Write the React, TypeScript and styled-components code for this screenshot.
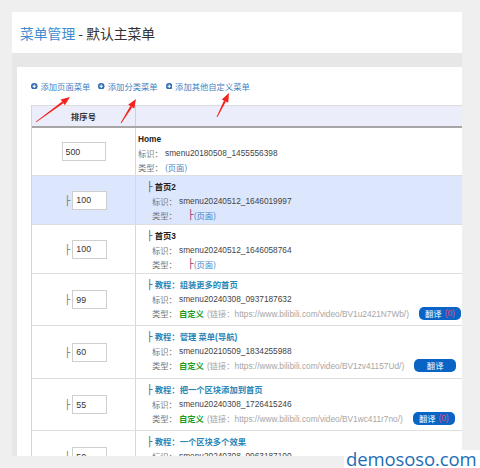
import React from 'react';
import styled, { createGlobalStyle } from 'styled-components';

const GlobalStyle = createGlobalStyle`
  html, body { margin: 0; padding: 0; background: #efefef; }
  body { font-family: "Liberation Sans", Arial, "Noto Sans CJK SC", sans-serif; }
  * { box-sizing: border-box; }
`;

const Screen = styled.div`
  position: relative;
  width: 480px;
  height: 468px;
  overflow: hidden;
  background: #efefef;
  padding: 12px 0 0 12px;
`;

const Frame = styled.div`
  width: 450px;
  display: flex;
  flex-direction: column;
`;

const Header = styled.div`
  height: 41px;
  background: #fff;
  display: flex;
  align-items: center;
  padding-left: 8px;
  font-size: 13.8px;
  color: #333;
  font-family: "Noto Sans CJK SC", sans-serif;
`;

const TitleLink = styled.span`
  color: #3f8ccd;
`;

const Body = styled.div`
  background: #e7e7e7;
  padding: 14px 0 0 5px;
  height: 403px;
`;

const Panel = styled.div`
  background: #fff;
  height: 389px;
  overflow: hidden;
  padding-left: 14px;
`;

const LinkBar = styled.div`
  height: 38px;
  display: flex;
  align-items: center;
  gap: 8px;
`;

const AddLink = styled.span`
  display: inline-flex;
  align-items: center;
  gap: 3px;
  color: #3f7fc4;
  font-size: 8.3px;
  font-family: "Noto Sans CJK SC", sans-serif;
  line-height: 10px;
`;

const Table = styled.div`
  width: 470px;
  border-left: 1px solid #d5d5d5;
  border-top: 1px solid #dcdcdc;
`;

const HeadRow = styled.div`
  display: grid;
  grid-template-columns: 104px 1fr;
  height: 22px;
  background: #ecedfb;
  border-bottom: 2px solid #a6a6a6;
`;

const HeadCell = styled.div`
  display: flex;
  align-items: center;
  justify-content: center;
  border-right: 1px solid #d0d0d0;
  font-size: 8.3px;
  font-weight: bold;
  color: #333;
  font-family: "Noto Sans CJK SC", sans-serif;
`;

const Row = styled.div<{ $h: number; $hi?: boolean }>`
  display: grid;
  grid-template-columns: 104px 1fr;
  height: ${(p) => p.$h}px;
  background: ${(p) => (p.$hi ? '#dce6fc' : '#fff')};
  border-bottom: 1px solid #dedede;
`;

const SortCell = styled.div<{ $shift: number }>`
  display: flex;
  align-items: center;
  justify-content: center;
  gap: 1px;
  padding-left: ${(p) => p.$shift}px;
  border-right: 1px solid #d8d8d8;
`;

const Branch = styled.span<{ $color?: string; $gap?: number }>`
  font-family: "DejaVu Sans", sans-serif;
  font-size: 9.5px;
  color: ${(p) => p.$color || '#777'};
  font-weight: normal;
  margin-right: ${(p) => p.$gap || 0}px;
`;

const SortInput = styled.input<{ $w: number }>`
  width: ${(p) => p.$w}px;
  height: 19px;
  border: 1px solid #cfcfcf;
  padding: 0 0 0 3px;
  font-size: 8.8px;
  color: #333;
  font-family: "Liberation Sans", Arial, sans-serif;
  background: #fff;
  outline: none;
`;

const ContentCell = styled.div`
  padding: 4px 0 0 2px;
  font-size: 8.3px;
  line-height: 14px;
  color: #444;
  white-space: nowrap;
`;

const Line = styled.div<{ $indent: number }>`
  padding-left: ${(p) => p.$indent}px;
  height: 14px;
  display: flex;
  align-items: center;
`;

const ItemTitle = styled.span<{ $blue?: boolean }>`
  font-weight: bold;
  color: ${(p) => (p.$blue ? '#2a86b6' : '#222')};
  font-family: "Liberation Sans", Arial, "Noto Sans CJK SC", sans-serif;
`;

const Label = styled.span`
  display: inline-block;
  width: 27px;
  color: #777;
  font-family: "Noto Sans CJK SC", sans-serif;
`;

const Value = styled.span`
  color: #444;
`;

const PageType = styled.span`
  color: #3f7fc9;
  font-family: "Noto Sans CJK SC", sans-serif;
`;

const PagePrefix = styled.span`
  margin-left: 9px;
  display: inline-flex;
  align-items: center;
`;

const Custom = styled.span`
  color: #1c9a1c;
  font-weight: bold;
  font-family: "Noto Sans CJK SC", sans-serif;
`;

const LinkText = styled.span`
  color: #a6a6a6;
  margin-left: 3px;
`;

const LinkLabel = styled.span`
  font-family: "Noto Sans CJK SC", sans-serif;
`;

const TransButton = styled.span`
  display: inline-flex;
  align-items: center;
  justify-content: center;
  gap: 3px;
  width: 42px;
  height: 13px;
  margin-left: 10px;
  border-radius: 5px;
  background: #0a64c6;
  color: #fff;
  font-size: 8.3px;
  font-family: "Noto Sans CJK SC", sans-serif;
`;

const Count = styled.span`
  color: #f0467a;
  font-family: "Liberation Sans", Arial, sans-serif;
`;

const Overlay = styled.svg`
  position: absolute;
  left: 0;
  top: 0;
  pointer-events: none;
`;

const Watermark = styled.div`
  position: absolute;
  right: 0;
  bottom: 0;
  width: 136px;
  height: 18px;
  background: #fff;
  color: #1d6db5;
  font-family: "Open Sans", sans-serif;
  font-size: 18.5px;
  line-height: 18px;
  padding-left: 2px;
  letter-spacing: -0.1px;
`;

type Item = {
  level: 0 | 1;
  sort: string;
  title: string;
  id: string;
  kind: 'page' | 'custom';
  link?: string;
  count?: boolean;
  h: number;
  hi?: boolean;
};

const items: Item[] = [
  { level: 0, sort: '500', title: 'Home', id: 'smenu20180508_1455556398', kind: 'page', h: 48 },
  { level: 1, sort: '100', title: '首页2', id: 'smenu20240512_1646019997', kind: 'page', h: 49, hi: true },
  { level: 1, sort: '100', title: '首页3', id: 'smenu20240512_1646058764', kind: 'page', h: 49 },
  { level: 1, sort: '99', title: '教程：组装更多的首页', id: 'smenu20240308_0937187632', kind: 'custom', link: 'https://www.bilibili.com/video/BV1u2421N7Wb/', count: true, h: 52 },
  { level: 1, sort: '60', title: '教程：管理 菜单(导航)', id: 'smenu20210509_1834255988', kind: 'custom', link: 'https://www.bilibili.com/video/BV1zv41157Ud/', h: 53 },
  { level: 1, sort: '55', title: '教程：把一个区块添加到首页', id: 'smenu20240308_1726415246', kind: 'custom', link: 'https://www.bilibili.com/video/BV1wc411r7no/', count: true, h: 52 },
  { level: 1, sort: '50', title: '教程：一个区块多个效果', id: 'smenu20240308_0963187100', kind: 'custom', link: 'https://www.bilibili.com/video/BV1ex421S7Yq/', h: 52 },
];

const PlusIcon = () => (
  <svg width="6.5" height="6.5" viewBox="0 0 12 12">
    <circle cx="6" cy="6" r="6" fill="#2f6db3" />
    <path d="M6 2.8v6.4M2.8 6h6.4" stroke="#fff" strokeWidth="2" />
  </svg>
);

const arrows: [number, number, number, number][] = [
  [36, 122, 70, 97],
  [121, 123, 136, 99],
  [217, 117, 229, 93],
];

const Arrow = ({ a }: { a: [number, number, number, number] }) => {
  const [x1, y1, x2, y2] = a;
  const dx = x2 - x1;
  const dy = y2 - y1;
  const len = Math.hypot(dx, dy);
  const ux = dx / len;
  const uy = dy / len;
  const px = -uy;
  const py = ux;
  const hl = 9;
  const hw = 3.6;
  const bx = x2 - ux * hl;
  const by = y2 - uy * hl;
  const head = `${x2},${y2} ${bx + px * hw},${by + py * hw} ${bx - px * hw},${by - py * hw}`;
  const shaft = `${x1 + px * 0.4},${y1 + py * 0.4} ${bx + px * 1.1},${by + py * 1.1} ${bx - px * 1.1},${by - py * 1.1} ${x1 - px * 0.4},${y1 - py * 0.4}`;
  return (
    <g fill="#f3241e">
      <polygon points={shaft} />
      <polygon points={head} />
    </g>
  );
};

const TypeLine = ({ it }: { it: Item }) => {
  if (it.kind === 'page') {
    return (
      <Line $indent={it.level ? 14 : 0}>
        <Label>类型：</Label>
        {it.level ? (
          <PagePrefix>
            <Branch $color="#8b3b63">├</Branch>
            <PageType>(页面)</PageType>
          </PagePrefix>
        ) : (
          <PageType>(页面)</PageType>
        )}
      </Line>
    );
  }
  return (
    <Line $indent={14}>
      <Label>类型：</Label>
      <Custom>自定义</Custom>
      <LinkText>
        (<LinkLabel>链接：</LinkLabel>
        {it.link})
      </LinkText>
      <TransButton>
        翻译{it.count ? <Count>(0)</Count> : null}
      </TransButton>
    </Line>
  );
};

export default function App() {
  return (
    <>
      <GlobalStyle />
      <Screen>
        <Frame>
          <Header>
            <TitleLink>菜单管理</TitleLink>&nbsp;- 默认主菜单
          </Header>
          <Body>
            <Panel>
              <LinkBar>
                <AddLink>
                  <PlusIcon />
                  添加页面菜单
                </AddLink>
                <AddLink>
                  <PlusIcon />
                  添加分类菜单
                </AddLink>
                <AddLink>
                  <PlusIcon />
                  添加其他自定义菜单
                </AddLink>
              </LinkBar>
              <Table>
                <HeadRow>
                  <HeadCell>排序号</HeadCell>
                  <div />
                </HeadRow>
                {items.map((it, i) => (
                  <Row key={i} $h={it.h} $hi={it.hi}>
                    <SortCell $shift={it.level ? 5 : 0}>
                      {it.level ? <Branch $gap={1}>├</Branch> : null}
                      <SortInput $w={it.level ? 35 : 44} defaultValue={it.sort} readOnly />
                    </SortCell>
                    <ContentCell>
                      <Line $indent={it.level ? 9 : 0}>
                        {it.level ? <Branch $color="#555" $gap={2}>├</Branch> : null}
                        <ItemTitle $blue={it.kind === 'custom'}>{it.title}</ItemTitle>
                      </Line>
                      <Line $indent={it.level ? 14 : 0}>
                        <Label>标识：</Label>
                        <Value>{it.id}</Value>
                      </Line>
                      <TypeLine it={it} />
                    </ContentCell>
                  </Row>
                ))}
              </Table>
            </Panel>
          </Body>
        </Frame>
        <Overlay width="480" height="468" viewBox="0 0 480 468">
          {arrows.map((a, i) => (
            <Arrow key={i} a={a} />
          ))}
        </Overlay>
        <Watermark>demososo.com</Watermark>
      </Screen>
    </>
  );
}
